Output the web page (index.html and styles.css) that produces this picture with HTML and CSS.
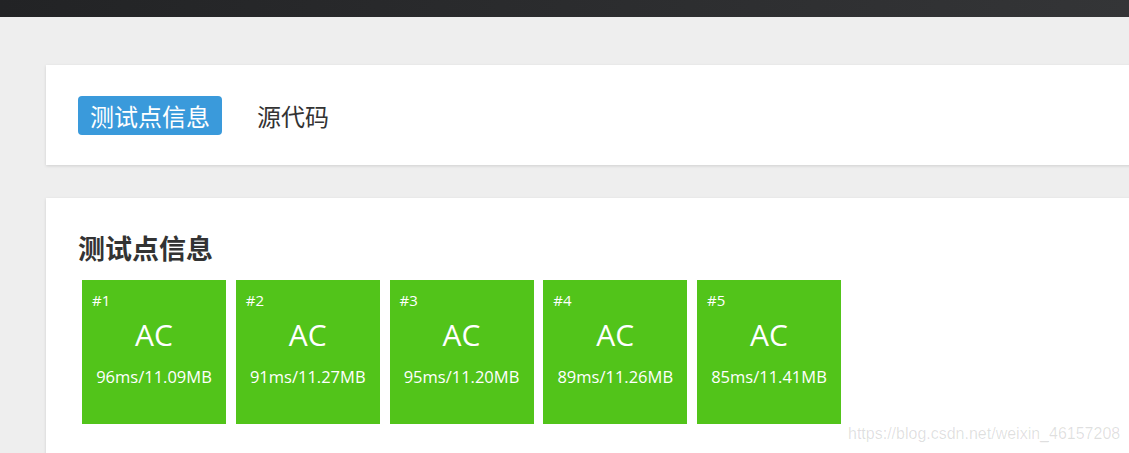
FILE: index.html
```html
<!DOCTYPE html>
<html lang="zh">
<head>
<meta charset="utf-8">
<link rel="stylesheet" href="styles.css">
</head>
<body>
<div class="topbar"></div>
<main class="main">
  <section class="card tabs-card">
    <div class="tabs">
      <span class="tab active">测试点信息</span>
      <span class="tab">源代码</span>
    </div>
  </section>
  <section class="card info-card">
    <h2 class="title">测试点信息</h2>
    <div class="cases">
      <div class="case"><span class="num">#1</span><span class="status">AC</span><span class="stat">96ms/11.09MB</span></div>
      <div class="case"><span class="num">#2</span><span class="status">AC</span><span class="stat">91ms/11.27MB</span></div>
      <div class="case"><span class="num">#3</span><span class="status">AC</span><span class="stat">95ms/11.20MB</span></div>
      <div class="case"><span class="num">#4</span><span class="status">AC</span><span class="stat">89ms/11.26MB</span></div>
      <div class="case"><span class="num">#5</span><span class="status">AC</span><span class="stat">85ms/11.41MB</span></div>
    </div>
    <div class="watermark">https://blog.csdn.net/weixin_46157208</div>
  </section>
</main>
</body>
</html>
```
FILE: styles.css
```css
html, body {
  margin: 0;
  padding: 0;
  overflow: hidden;
  background: #eeeeee;
  font-family: "Open Sans", "Noto Sans CJK SC", sans-serif;
}
.topbar {
  height: 17px;
  background: linear-gradient(to right, #222325, #343537);
}
.main {
  padding: 48px 0 0 46px;
  width: 1120px;
}
.card {
  background: #fff;
  box-shadow: 0 1px 3px rgba(0,0,0,0.13);
}
.tabs-card {
  height: 100px;
  box-sizing: border-box;
  padding: 31px 32px 0;
}
.tabs {
  display: flex;
  align-items: center;
  gap: 35px;
}
.tab {
  font-family: "Noto Sans CJK SC", sans-serif;
  font-size: 24px;
  line-height: 39px;
  color: #333;
}
.tab.active {
  background: #3a9adb;
  color: #fff;
  border-radius: 4px;
  padding: 0 12px;
}
.info-card {
  margin-top: 33px;
  height: 300px;
  padding: 31px 32px 0;
  box-sizing: border-box;
  position: relative;
}
.title {
  margin: 0 0 14px;
  font-family: "Noto Sans CJK SC", sans-serif;
  font-size: 27px;
  font-weight: 700;
  line-height: 37px;
  color: #333;
}
.cases {
  display: flex;
  gap: 9.75px;
  padding-left: 4px;
}
.case {
  width: 144px;
  height: 144px;
  background: #52c41a;
  color: #fff;
  display: flex;
  flex-direction: column;
  align-items: center;
  box-sizing: border-box;
  padding-top: 10px;
}
.num {
  align-self: flex-start;
  margin-left: 10px;
  font-size: 15px;
  line-height: 20px;
}
.status {
  font-size: 30px;
  line-height: 34px;
  margin-top: 8px;
}
.stat {
  font-size: 16.5px;
  line-height: 22px;
  margin-top: 14px;
}
.watermark {
  position: absolute;
  left: 802px;
  top: 227px;
  font-family: "Liberation Sans", Arial, sans-serif;
  font-size: 16px;
  color: rgba(0,0,0,0.13);
}
```
